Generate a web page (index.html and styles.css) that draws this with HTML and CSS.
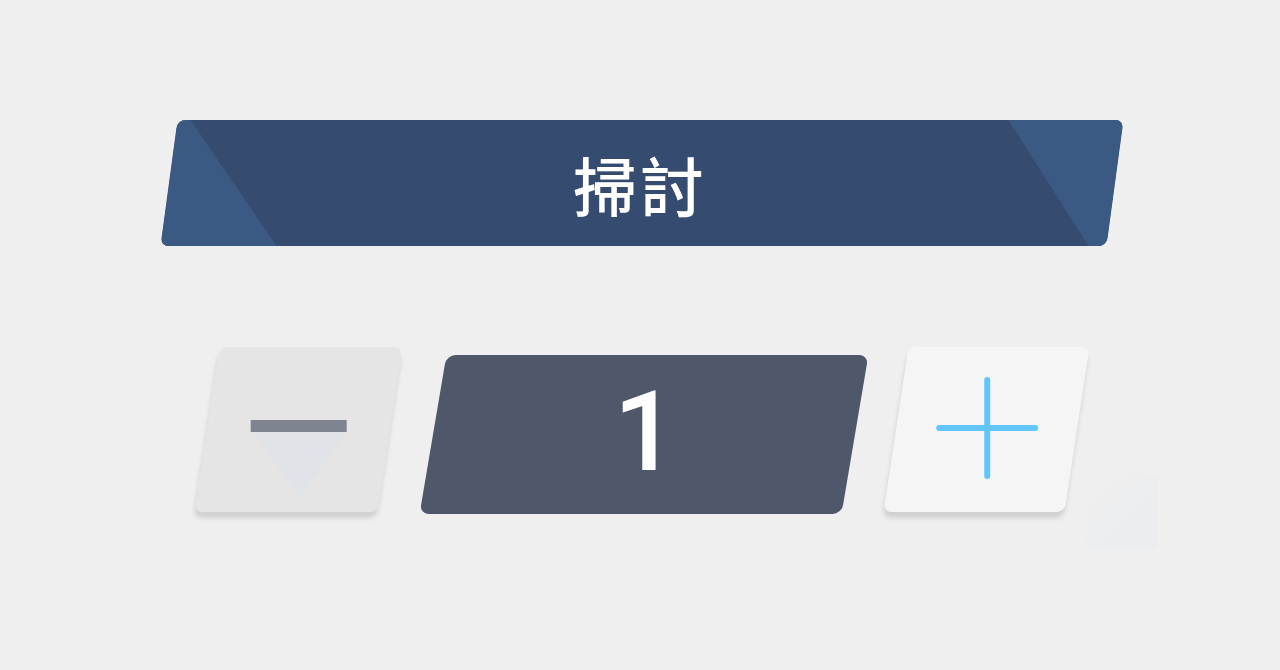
FILE: index.html
```html
<!DOCTYPE html>
<html lang="zh-Hant">
<head>
<meta charset="utf-8">
<title>掃討</title>
<link rel="stylesheet" href="styles.css">
</head>
<body>
<main class="page">
  <div class="banner">
    <span class="banner-label">掃討</span>
  </div>
  <div class="stepper">
    <button class="step step-minus" type="button" aria-label="減少">
      <svg class="step-icon" width="100" height="80" viewBox="0 0 100 80">
        <polygon points="4,14 98,14 51,80" fill="#e0e3e8"/>
        <rect x="2" y="2" width="96" height="12" fill="#7f8491"/>
      </svg>
    </button>
    <div class="step-value"><span>1</span></div>
    <button class="step step-plus" type="button" aria-label="增加">
      <svg class="step-icon" width="104" height="104" viewBox="0 0 104 104">
        <path d="M52 4 V100 M4 52 H100" stroke="#62c6fb" stroke-width="6" stroke-linecap="round" fill="none"/>
      </svg>
    </button>
  </div>
  <div class="glow"></div>
</main>
</body>
</html>
```

FILE: styles.css
```css
html, body {
  margin: 0;
  height: 100%;
}

body {
  background: #efefef;
  font-family: "Noto Sans CJK TC", "Noto Sans", sans-serif;
  overflow: hidden;
}

.page {
  position: relative;
  padding: 120px 0 0 169px;
}

/* Title banner: a slanted navy strip with lighter corner wedges */
.banner {
  position: relative;
  width: 946px;
  height: 126px;
  background: #364b70;
  border-radius: 8px;
  transform: skewX(-7.7deg);
  display: flex;
  align-items: center;
  justify-content: center;
  overflow: hidden;
}

.banner::before,
.banner::after {
  content: "";
  position: absolute;
  inset: 0;
  background: #3a5a84;
}

.banner::before {
  clip-path: polygon(0 0, 13px 0, 116px 100%, 0 100%);
}

.banner::after {
  clip-path: polygon(calc(100% - 115px) 0, 100% 0, 100% 100%, calc(100% - 18px) 100%);
}

.banner-label {
  position: relative;
  z-index: 1;
  transform: skewX(7.7deg);
  color: #ffffff;
  font-size: 64px;
  font-weight: 500;
  letter-spacing: 3px;
  line-height: 1;
  margin-left: -4px;
}

/* Quantity stepper */
.stepper {
  display: flex;
  align-items: flex-start;
  margin: 101px 0 0 38px;
}

.step {
  width: 183px;
  height: 165px;
  border: none;
  padding: 0;
  border-radius: 8px;
  transform: skewX(-8.6deg);
  display: flex;
  align-items: center;
  justify-content: center;
  box-shadow: 0 6px 5px rgba(0, 0, 0, 0.13);
  cursor: pointer;
}

.step-icon {
  transform: skewX(8.6deg);
  display: block;
}

.step-minus {
  background: #e5e5e5;
}

.step-minus .step-icon {
  margin-top: 56px;
  margin-left: 8px;
}

.step-plus {
  width: 181px;
  background: #f5f5f5;
  margin-left: 41px;
}

.step-plus .step-icon {
  margin-top: -3px;
}

.step-value {
  width: 422px;
  height: 159px;
  margin: 8px 0 0 43px;
  background: #4f586b;
  border-radius: 9px;
  transform: skewX(-9.6deg);
  display: flex;
  align-items: center;
  justify-content: center;
}

.step-value span {
  transform: skewX(9.6deg);
  color: #ffffff;
  font-family: "Roboto", "Liberation Sans", sans-serif;
  font-weight: 500;
  font-size: 112px;
  line-height: 1;
  margin-left: 2px;
  margin-top: -6px;
}

/* faint highlight beside the plus button */
.glow {
  position: absolute;
  left: 1085px;
  top: 475px;
  width: 73px;
  height: 75px;
  background: linear-gradient(135deg, rgba(236, 238, 242, 0) 10%, rgba(234, 236, 240, 0.7) 70%);
}
```
